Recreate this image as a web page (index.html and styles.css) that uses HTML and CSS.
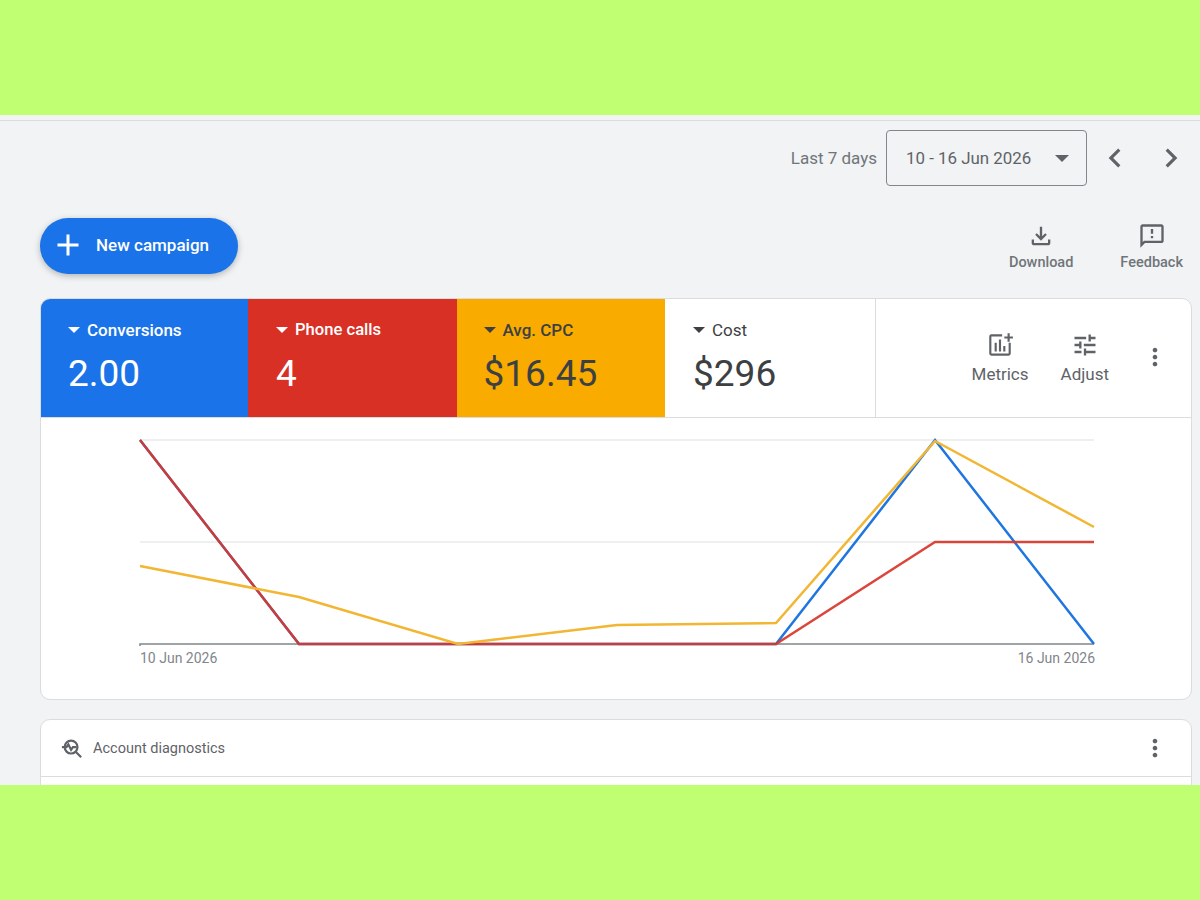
FILE: index.html
```html
<!DOCTYPE html>
<html lang="en">
<head>
    <meta charset="UTF-8">
    <meta name="viewport" content="width=device-width, initial-scale=1.0">
    <title>Overview</title>
    <link rel="stylesheet" href="styles.css">
</head>
<body>
    <div class="band"></div>

    <div class="app">
        <div class="main">
            <div class="date-row">
                <span class="date-label">Last 7 days</span>
                <div class="date-box">
                    <span>10 - 16 Jun 2026</span>
                    <span class="caret caret-grey"></span>
                </div>
                <button class="nav-btn">
                    <svg viewBox="0 0 24 24" class="nav-icon"><path d="M15.41 7.41L14 6l-6 6 6 6 1.41-1.41L10.83 12z"/></svg>
                </button>
                <button class="nav-btn">
                    <svg viewBox="0 0 24 24" class="nav-icon"><path d="M10 6L8.59 7.41 13.17 12l-4.58 4.59L10 18l6-6z"/></svg>
                </button>
            </div>

            <div class="action-row">
                <button class="new-btn">
                    <svg viewBox="0 0 24 24" class="plus-icon"><path d="M19 13h-6v6h-2v-6H5v-2h6V5h2v6h6v2z"/></svg>
                    New campaign
                </button>
                <div class="tools">
                    <div class="tool">
                        <svg viewBox="0 0 24 24" class="icon"><path d="M18 15v3H6v-3H4v3c0 1.1.9 2 2 2h12c1.1 0 2-.9 2-2v-3h-2zm-1-4l-1.41-1.41L13 12.17V4h-2v8.17L8.41 9.59 7 11l5 5 5-5z"/></svg>
                        <span>Download</span>
                    </div>
                    <div class="tool">
                        <svg viewBox="0 0 24 24" class="icon"><path d="M20 2H4c-1.1 0-1.99.9-1.99 2L2 22l4-4h14c1.1 0 2-.9 2-2V4c0-1.1-.9-2-2-2zm0 14H5.17L4 17.17V4h16v12zm-9-4h2v2h-2zm0-6h2v4h-2z"/></svg>
                        <span>Feedback</span>
                    </div>
                </div>
            </div>

            <div class="card chart-card">
                <div class="tiles">
                    <div class="tile tile-blue">
                        <div class="tile-name"><span class="caret"></span>Conversions</div>
                        <div class="tile-value">2.00</div>
                    </div>
                    <div class="tile tile-red">
                        <div class="tile-name"><span class="caret"></span>Phone calls</div>
                        <div class="tile-value">4</div>
                    </div>
                    <div class="tile tile-yellow">
                        <div class="tile-name"><span class="caret caret-dark"></span>Avg. CPC</div>
                        <div class="tile-value">$16.45</div>
                    </div>
                    <div class="tile tile-white">
                        <div class="tile-name"><span class="caret caret-dark"></span>Cost</div>
                        <div class="tile-value">$296</div>
                    </div>
                    <div class="tile-tools">
                        <div class="tile-tool">
                            <svg viewBox="-1 -1 26 26" class="icon"><path d="M14 2H4a2 2 0 0 0-2 2v16a2 2 0 0 0 2 2h16a2 2 0 0 0 2-2V10h-2v10H4V4h10zM19 1v3h-3v2h3v3h2V6h3V4h-3V1zM7 10h2v8H7zM11 7h2v11h-2zM15 13h2v5h-2z"/></svg>
                            <span>Metrics</span>
                        </div>
                        <div class="tile-tool">
                            <svg viewBox="0 0 24 24" class="icon"><path d="M3 17v2h6v-2H3zM3 5v2h10V5H3zm10 16v-2h8v-2h-8v-2h-2v6h2zM7 9v2H3v2h4v2h2V9H7zm14 4v-2H11v2h10zm-6-4h2V7h4V5h-4V3h-2v6z"/></svg>
                            <span>Adjust</span>
                        </div>
                        <svg viewBox="0 0 24 24" class="icon more"><path d="M12 8c1.1 0 2-.9 2-2s-.9-2-2-2-2 .9-2 2 .9 2 2 2zm0 2c-1.1 0-2 .9-2 2s.9 2 2 2 2-.9 2-2-.9-2-2-2zm0 6c-1.1 0-2 .9-2 2s.9 2 2 2 2-.9 2-2-.9-2-2-2z"/></svg>
                    </div>
                </div>

                <svg class="chart" viewBox="41 418 1150 280">
                    <line class="grid" x1="140" y1="440" x2="1094" y2="440"/>
                    <line class="grid" x1="140" y1="542" x2="1094" y2="542"/>
                    <polyline class="axis" points="140,646 140,644 1094,644"/>
                    <polyline class="line-blue" points="140,440 299,644 776,644 935,440 1094,644"/>
                    <polyline class="line-red" points="140,440 299,644 776,644 935,542 1094,542"/>
                    <polyline class="line-yellow" points="140,566 299,597 458,644 617,625 776,623 935,441 1094,527"/>
                    <text class="axis-text" x="140" y="663">10 Jun 2026</text>
                    <text class="axis-text" x="1095" y="663" text-anchor="end">16 Jun 2026</text>
                </svg>
            </div>

            <div class="card diag-card">
                <div class="diag-head">
                    <svg viewBox="0 0 24 24" class="diag-icon">
                        <circle cx="11" cy="11" r="7"/>
                        <path d="M16 16l6 6M1 11h5l2-3 3 6 2-3h4"/>
                    </svg>
                    <span class="diag-title">Account diagnostics</span>
                    <svg viewBox="0 0 24 24" class="icon more"><path d="M12 8c1.1 0 2-.9 2-2s-.9-2-2-2-2 .9-2 2 .9 2 2 2zm0 2c-1.1 0-2 .9-2 2s.9 2 2 2 2-.9 2-2-.9-2-2-2zm0 6c-1.1 0-2 .9-2 2s.9 2 2 2 2-.9 2-2-.9-2-2-2z"/></svg>
                </div>
            </div>
        </div>
    </div>

    <div class="band"></div>
</body>
</html>
```
FILE: styles.css
```css
:root { --bg: #f1f3f4; --line: #dadce0; --grey: #5f6368; --text: #3c4043; --blue: #1a73e8; --red: #d93025; --yellow: #f9ab00; }

* {
    box-sizing: border-box;
    margin: 0;
    padding: 0;
}

html, body {
    height: 900px;
    overflow: hidden;
}

body {
    font-family: Roboto, "Liberation Sans", sans-serif;
    color: var(--text);
    background: var(--bg);
}

.band {
    height: 115px;
    background: #c1ff72;
}

.app {
    height: 670px;
    overflow: hidden;
    padding-top: 5px;
    background: #f3f3f3;
}

.main {
    height: 100%;
    padding: 9px 8px 0 40px;
    background: var(--bg);
    border-top: 1px solid var(--line);
}

/* date picker row */
.date-row {
    display: flex;
    align-items: center;
    justify-content: flex-end;
    height: 56px;
    margin-right: -7px;
}

.date-label {
    margin-right: 9px;
    font-size: 17px;
    color: #70757a;
}

.date-box {
    display: flex;
    align-items: center;
    justify-content: space-between;
    width: 201px;
    height: 56px;
    padding: 0 17px 0 19px;
    font-size: 16.9px;
    color: var(--grey);
    border: 1px solid #80868b;
    border-radius: 4px;
}

.nav-btn {
    display: flex;
    align-items: center;
    justify-content: center;
    width: 56px;
    height: 56px;
    background: none;
    border: none;
}

.nav-icon {
    width: 38px;
    height: 38px;
    fill: var(--grey);
}

.caret {
    display: inline-block;
    width: 0;
    height: 0;
    margin-right: 7px;
    border-left: 6px solid transparent;
    border-right: 6px solid transparent;
    border-top: 6px solid #fff;
}

.caret-grey {
    margin-right: 0;
    margin-left: 8px;
    border-left-width: 7px;
    border-right-width: 7px;
    border-top: 7px solid var(--grey);
}

.caret-dark {
    border-top-color: var(--text);
}

/* new campaign + tools */
.action-row {
    display: flex;
    align-items: center;
    justify-content: space-between;
    height: 56px;
    margin-top: 32px;
    margin-bottom: 24px;
}

.new-btn {
    display: flex;
    align-items: center;
    width: 198px;
    height: 56px;
    padding: 0 0 2px 10px;
    font-family: inherit;
    font-size: 17px;
    font-weight: 500;
    color: #fff;
    background: var(--blue);
    border: none;
    border-radius: 28px;
    box-shadow: 0 2px 6px rgba(60, 64, 67, 0.35);
}

.plus-icon {
    width: 36px;
    height: 36px;
    margin-right: 10px;
    fill: #fff;
}

.tools {
    display: flex;
    gap: 47px;
    padding-right: 9px;
}

.tool {
    display: flex;
    flex-direction: column;
    align-items: center;
    gap: 4px;
    margin-top: 1px;
    font-size: 14.5px;
    font-weight: 500;
    color: #70757a;
}

.icon {
    display: block;
    width: 28px;
    height: 28px;
    fill: var(--grey);
}

/* cards */
.card {
    background: #fff;
    border: 1px solid var(--line);
    border-radius: 10px;
    overflow: hidden;
}

.chart-card {
    height: 402px;
    margin-bottom: 19px;
}

.tiles {
    display: flex;
    height: 119px;
    border-bottom: 1px solid var(--line);
}

.tile {
    width: 208.5px;
    padding: 21px 0 0 27px;
    color: #fff;
}

.tile-blue { background: var(--blue); width: 207px; }
.tile-red { background: var(--red); padding-left: 28px; }
.tile-yellow { background: var(--yellow); color: var(--text); }
.tile-white { color: var(--text); width: 211px; padding-left: 28px; border-right: 1px solid var(--line); }

.tile-name {
    display: flex;
    align-items: center;
    font-size: 17px;
    font-weight: 500;
    line-height: 20px;
}

.tile-red .tile-name {
    font-size: 16.6px;
}

.tile-white .tile-name {
    font-weight: 400;
}

.tile-value {
    margin-top: 12px;
    font-size: 37px;
    line-height: 44px;
}

.tile-tools {
    flex: 1;
    display: flex;
    align-items: flex-start;
    justify-content: flex-end;
    gap: 32px;
    padding: 32px 22px 0 0;
}

.tile-tool {
    display: flex;
    flex-direction: column;
    align-items: center;
    gap: 5px;
    font-size: 17px;
    color: var(--grey);
}

.more {
    margin-top: 12px;
}

.chart {
    display: block;
    width: 1150px;
    height: 280px;
}

.grid {
    stroke: #e8eaed;
    stroke-width: 1.5;
}

.axis {
    fill: none;
    stroke: #80868b;
    stroke-width: 1.5;
}

.line-blue, .line-red, .line-yellow {
    fill: none;
    stroke-width: 2.5;
}

.line-blue { stroke: #1f76e0; }
.line-red { stroke: #d8382c; stroke-opacity: 0.93; }
.line-yellow { stroke: #f2b632; }

.axis-text {
    font-size: 14px;
    fill: #80868b;
}

.diag-card {
    height: 120px;
}

.diag-head {
    display: flex;
    align-items: center;
    height: 57px;
    padding: 0 22px 0 20px;
    border-bottom: 1px solid var(--line);
}

.diag-head .more {
    margin-top: 0;
}

.diag-icon {
    width: 22px;
    height: 22px;
    margin-right: 10px;
    fill: none;
    stroke: var(--grey);
    stroke-width: 2.4;
}

.diag-title {
    flex: 1;
    font-size: 14.5px;
    color: var(--grey);
}
```
